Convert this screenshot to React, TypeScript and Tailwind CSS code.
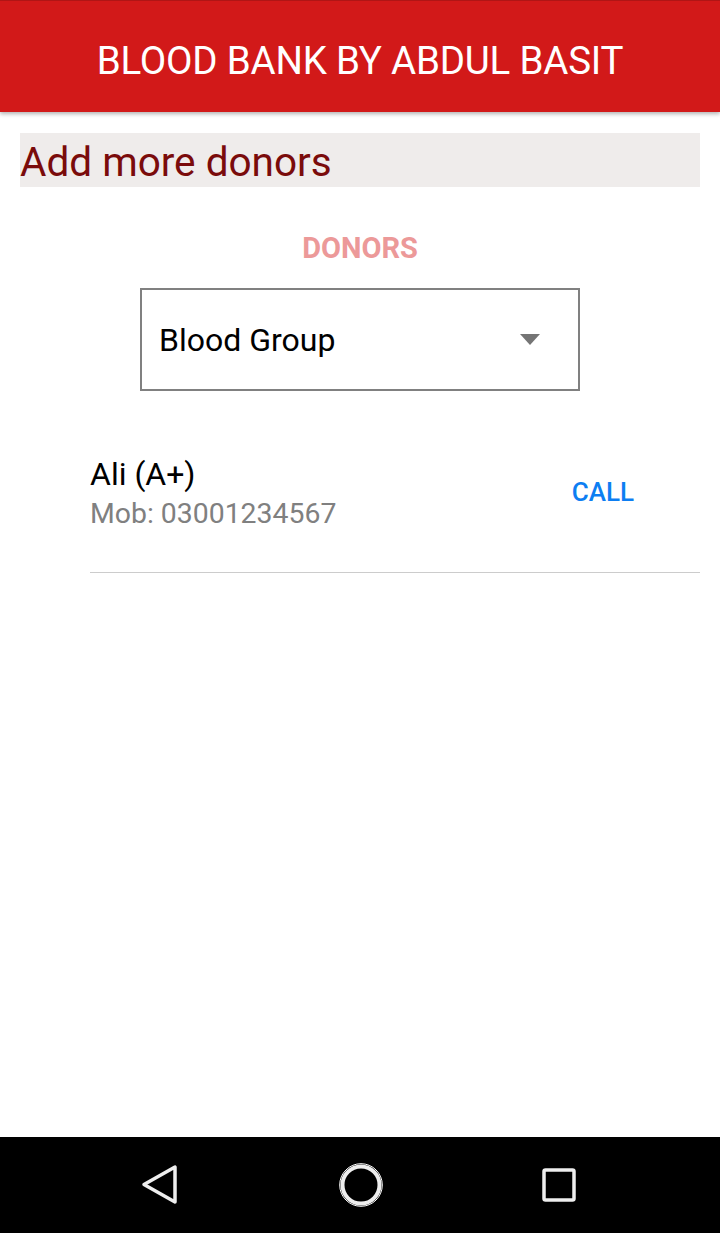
export default function App() {
  return (
    <div className="relative flex h-[1233px] w-[720px] flex-col bg-white font-['Roboto',sans-serif]">
      <header className="z-10 flex h-[112px] shrink-0 items-center justify-center border-t border-[#b01515] bg-[#d21919] pt-2 shadow-[0_2px_4px_rgba(0,0,0,0.3)]">
        <h1 className="text-[38.5px] tracking-[-0.2px] text-white">BLOOD BANK BY ABDUL BASIT</h1>
      </header>

      <main className="flex flex-1 flex-col">
        <div className="mx-5 mt-[21px] h-[54px] bg-[#efeceb] pt-[9px]">
          <span className="block text-[40.5px] leading-none text-[#7a0b0b]">Add more donors</span>
        </div>

        <p className="mt-[47px] text-center text-[29px] font-bold leading-none text-[#ec9999]">DONORS</p>

        <div className="mx-auto mt-[25px] flex h-[103px] w-[440px] items-center justify-between border-2 border-[#808080] pl-[17px] pr-[38px]">
          <span className="text-[32px] text-black">Blood Group</span>
          <svg width="20" height="11" viewBox="0 0 20 11">
            <path d="M0 0 L20 0 L10 11 Z" fill="#757575" />
          </svg>
        </div>

        <div className="ml-[90px] mr-5 mt-[64px] flex items-center justify-between border-b border-[#cccccc] pb-[39px]">
          <div className="flex flex-col">
            <span className="text-[32px] leading-[39px] text-black">Ali (A+)</span>
            <span className="text-[28.4px] leading-[39px] text-[#808080]">Mob: 03001234567</span>
          </div>
          <span className="mr-[66px] mt-[-4px] text-[26px] font-medium text-[#0d7ef2]">CALL</span>
        </div>
      </main>

      <nav className="flex h-[96px] shrink-0 items-center justify-between bg-black pl-[141px] pr-[143px]">
        <svg width="40" height="42" viewBox="0 0 40 42">
          <path d="M34 3 L34 38 L3 20.5 Z" fill="none" stroke="#eeeeee" strokeWidth="3.5" strokeLinejoin="round" />
        </svg>
        <svg width="48" height="48" viewBox="0 0 48 48">
          <circle cx="24" cy="24" r="18.5" fill="none" stroke="#eeeeee" strokeWidth="4" />
          <circle cx="24" cy="24" r="21.3" fill="none" stroke="#ffffff" strokeWidth="1" />
        </svg>
        <svg width="36" height="36" viewBox="0 0 36 36">
          <rect x="3" y="3" width="30" height="30" rx="1.5" fill="none" stroke="#eeeeee" strokeWidth="3.5" />
        </svg>
      </nav>
    </div>
  )
}
